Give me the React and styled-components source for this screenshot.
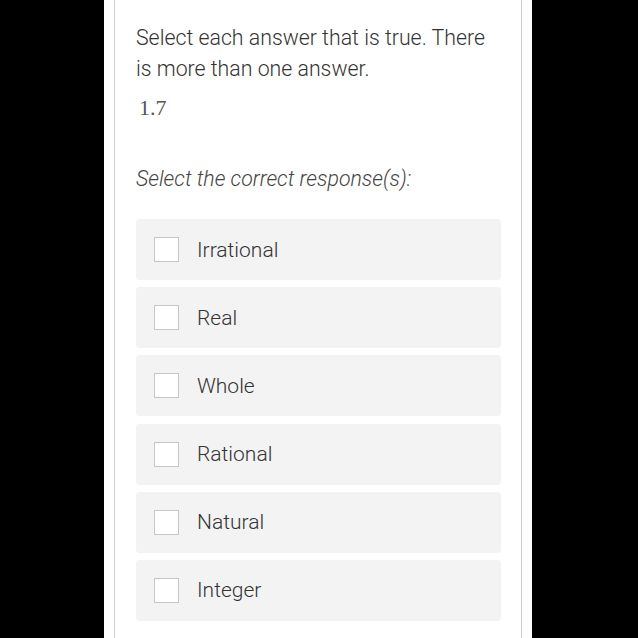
import React from "react";
import styled, { createGlobalStyle } from "styled-components";

const Global = createGlobalStyle`
  html, body { margin: 0; padding: 0; background: #000; }
  body { font-family: Roboto, "Liberation Sans", sans-serif; }
`;

const Stage = styled.div`
  width: 638px;
  height: 638px;
  overflow: hidden;
  display: flex;
  padding-left: 104px;
  box-sizing: border-box;
  background: #000;
`;

const Sheet = styled.div`
  width: 408px;
  padding: 0 10px;
  background: #fff;
  display: flex;
`;

const Card = styled.div`
  flex: 1;
  border-left: 1px solid #cfcfcf;
  border-right: 1px solid #cfcfcf;
  padding: 22px 20px 0 21px;
  display: flex;
  flex-direction: column;
`;

const Prompt = styled.p`
  margin: 0;
  font-size: 21.3px;
  font-weight: 300;
  line-height: 31px;
  color: #333;
`;

const Value = styled.div`
  margin-top: 10px;
  font-family: "Liberation Serif", "DejaVu Serif", serif;
  font-size: 22px;
  line-height: 28px;
  color: #555;
  padding-left: 3px;
`;

const Instruction = styled.div`
  margin-top: 43px;
  font-style: italic;
  font-weight: 300;
  font-size: 21.3px;
  line-height: 28px;
  color: #444;
`;

const Options = styled.div`
  margin-top: 26px;
  display: flex;
  flex-direction: column;
  gap: 7.2px;
`;

const Option = styled.label`
  height: 61px;
  border-radius: 4px;
  background: #f3f3f3;
  display: flex;
  align-items: center;
  padding-left: 18px;
  gap: 18px;
  cursor: pointer;
`;

const Box = styled.span`
  width: 23px;
  height: 23px;
  border: 1px solid #c6c6c6;
  background: #fff;
  box-sizing: content-box;
`;

const OptionText = styled.span`
  font-size: 21px;
  font-weight: 300;
  color: #333;
`;

const options = ["Irrational", "Real", "Whole", "Rational", "Natural", "Integer"];

export default function App() {
  return (
    <>
      <Global />
      <Stage>
        <Sheet>
          <Card>
            <Prompt>Select each answer that is true. There is more than one answer.</Prompt>
            <Value>1.7</Value>
            <Instruction>Select the correct response(s):</Instruction>
            <Options>
              {options.map((o) => (
                <Option key={o}>
                  <Box />
                  <OptionText>{o}</OptionText>
                </Option>
              ))}
            </Options>
          </Card>
        </Sheet>
      </Stage>
    </>
  );
}
